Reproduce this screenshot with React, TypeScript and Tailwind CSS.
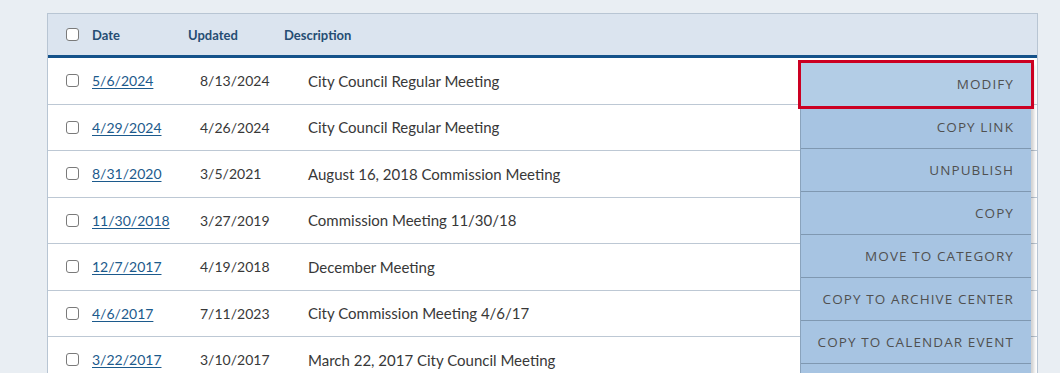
import React from "react"

const rows = [
  { date: "5/6/2024", updated: "8/13/2024", desc: "City Council Regular Meeting" },
  { date: "4/29/2024", updated: "4/26/2024", desc: "City Council Regular Meeting" },
  { date: "8/31/2020", updated: "3/5/2021", desc: "August 16, 2018 Commission Meeting" },
  { date: "11/30/2018", updated: "3/27/2019", desc: "Commission Meeting 11/30/18" },
  { date: "12/7/2017", updated: "4/19/2018", desc: "December Meeting" },
  { date: "4/6/2017", updated: "7/11/2023", desc: "City Commission Meeting 4/6/17" },
  { date: "3/22/2017", updated: "3/10/2017", desc: "March 22, 2017 City Council Meeting" },
]

const actions = [
  "MODIFY",
  "COPY LINK",
  "UNPUBLISH",
  "COPY",
  "MOVE TO CATEGORY",
  "COPY TO ARCHIVE CENTER",
  "COPY TO CALENDAR EVENT",
  "",
]

function Box() {
  return <span className="block h-[13px] w-[13px] shrink-0 rounded-[3px] border border-[#7a7a7a] bg-white" />
}

export default function App() {
  return (
    <div className="relative h-[373px] overflow-hidden bg-[#e9eef3] pt-[13px] pl-[47px] font-['Lato','Liberation_Sans',sans-serif]">
      <div className="w-[991px] border border-[#b8c5d3] bg-white">
        <div className="flex h-[44px] items-center border-b-[3px] border-[#14528a] bg-[#dbe4ef] pl-[18px] text-[13px] font-bold text-[#264d73]">
          <Box />
          <span className="ml-[13px] w-[96px] pt-[2px]">Date</span>
          <span className="w-[96px] pt-[2px]">Updated</span>
          <span className="pt-[2px]">Description</span>
        </div>
        {rows.map((r) => (
          <div key={r.date} className="flex h-[46.5px] items-center border-b border-[#bdc8d4] pl-[18px] text-[15px] text-[#383838]">
            <Box />
            <a href="#" className="ml-[13px] w-[108px] text-[14px] text-[#1c5a8c] underline underline-offset-2">{r.date}</a>
            <span className="w-[108px] text-[14px]">{r.updated}</span>
            <span>{r.desc}</span>
          </div>
        ))}
      </div>

      <div className="absolute left-[800px] top-[63px] w-[231px] border-l border-[#8aa3bc] shadow-[3px_2px_3px_rgba(0,0,0,0.18)] font-['Open_Sans','Liberation_Sans',sans-serif]">
        {actions.map((a, i) => (
          <div
            key={i}
            className={
              i === 0
                ? "relative z-10 flex h-[43px] items-center justify-end bg-[#b3cde6] pr-[17px] text-[13.5px] tracking-[1.1px] text-[#505050] outline-[3px] outline-solid outline-[#cc0022]"
                : "flex h-[43px] items-center justify-end border-b border-[#7f98b1] bg-[#a7c4e2] pr-[17px] text-[13.5px] tracking-[1.1px] text-[#505050]"
            }
          >
            {a}
          </div>
        ))}
      </div>
    </div>
  )
}
